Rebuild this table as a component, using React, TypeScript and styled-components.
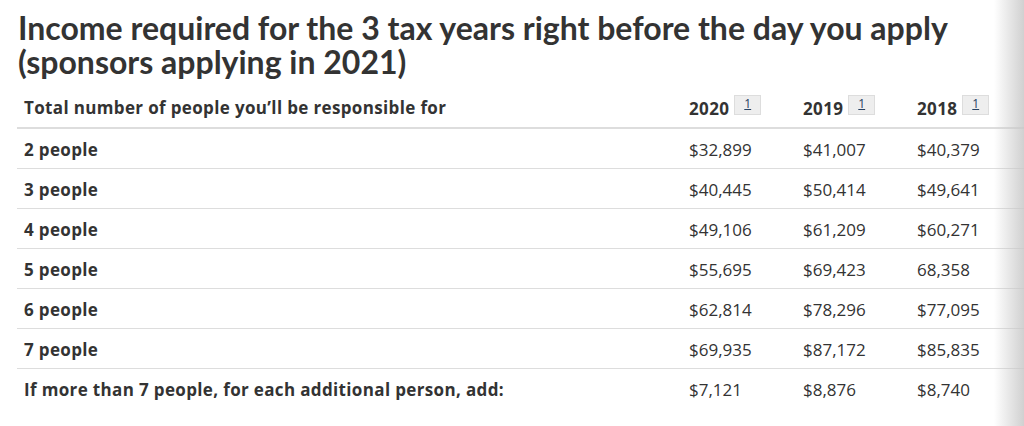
import React from "react";
import styled, { createGlobalStyle } from "styled-components";

const GlobalStyle = createGlobalStyle`
  html, body {
    margin: 0;
    padding: 0;
    background: #fff;
    overflow: hidden;
  }
  body {
    font-family: "Open Sans", "Noto Sans", sans-serif;
    color: #333;
  }
`;

interface IncomeRow {
  label: string;
  values: string[];
}

const rows: IncomeRow[] = [
  { label: "2 people", values: ["$32,899", "$41,007", "$40,379"] },
  { label: "3 people", values: ["$40,445", "$50,414", "$49,641"] },
  { label: "4 people", values: ["$49,106", "$61,209", "$60,271"] },
  { label: "5 people", values: ["$55,695", "$69,423", "68,358"] },
  { label: "6 people", values: ["$62,814", "$78,296", "$77,095"] },
  { label: "7 people", values: ["$69,935", "$87,172", "$85,835"] },
  {
    label: "If more than 7 people, for each additional person, add:",
    values: ["$7,121", "$8,876", "$8,740"],
  },
];

const years = ["2020", "2019", "2018"];

const App = () => {
  return (
    <Page>
      <GlobalStyle />
      <Heading>
        Income required for the 3 tax years right before the day you apply
        (sponsors applying in 2021)
      </Heading>
      <Table>
        <colgroup>
          <col style={{ width: 665 }} />
          <col style={{ width: 114 }} />
          <col style={{ width: 114 }} />
          <col style={{ width: 114 }} />
        </colgroup>
        <thead>
          <tr>
            <HeadCell>Total number of people you’ll be responsible for</HeadCell>
            {years.map((year) => (
              <HeadCell key={year}>
                {year}
                <Footnote>
                  <FootnoteLink href="#fn1">1</FootnoteLink>
                </Footnote>
              </HeadCell>
            ))}
          </tr>
        </thead>
        <tbody>
          {rows.map((row) => (
            <BodyRow key={row.label}>
              <RowLabel>{row.label}</RowLabel>
              {row.values.map((value, i) => (
                <Cell key={i}>{value}</Cell>
              ))}
            </BodyRow>
          ))}
        </tbody>
      </Table>
      <EdgeShade />
    </Page>
  );
};

export default App;

const Page = styled.div`
  position: relative;
  width: 1024px;
  height: 426px;
  padding: 11px 0 0 17px;
  box-sizing: border-box;
  overflow: hidden;
`;

const Heading = styled.h2`
  margin: 0 0 8px 1px;
  width: 960px;
  font-family: Lato, "Noto Sans", sans-serif;
  font-weight: 700;
  font-size: 32px;
  line-height: 34px;
  color: #333;
`;

const Table = styled.table`
  width: 1007px;
  table-layout: fixed;
  border-collapse: collapse;
  font-size: 17px;
`;

const HeadCell = styled.th`
  height: 40px;
  padding: 0 7px;
  text-align: left;
  vertical-align: middle;
  font-weight: 700;
  letter-spacing: 0.35px;
  color: #333;
  border-bottom: 2px solid #ddd;
  white-space: nowrap;
`;

const Footnote = styled.sup`
  display: inline-block;
  margin-left: 5px;
  vertical-align: 7px;
  font-size: 12px;
  line-height: 1;
  letter-spacing: 0;
`;

const FootnoteLink = styled.a`
  display: inline-block;
  padding: 2px 9px 4px;
  background: #eee;
  border: 1px solid #ddd;
  color: #284162;
  font-weight: 400;
  text-decoration: underline;
`;

const BodyRow = styled.tr`
  border-bottom: 1px solid #ddd;

  &:last-child {
    border-bottom: none;
  }
`;

const RowLabel = styled.th`
  height: 38px;
  padding: 1px 7px 0;
  text-align: left;
  font-weight: 700;
  letter-spacing: 0.35px;
  color: #333;
  white-space: nowrap;
`;

const Cell = styled.td`
  height: 38px;
  padding: 1px 7px 0;
  color: #333;
`;

const EdgeShade = styled.div`
  position: absolute;
  top: 0;
  right: 0;
  width: 30px;
  height: 100%;
  background: linear-gradient(
    to right,
    rgba(255, 255, 255, 0),
    rgba(200, 200, 200, 0.85)
  );
  pointer-events: none;
`;
